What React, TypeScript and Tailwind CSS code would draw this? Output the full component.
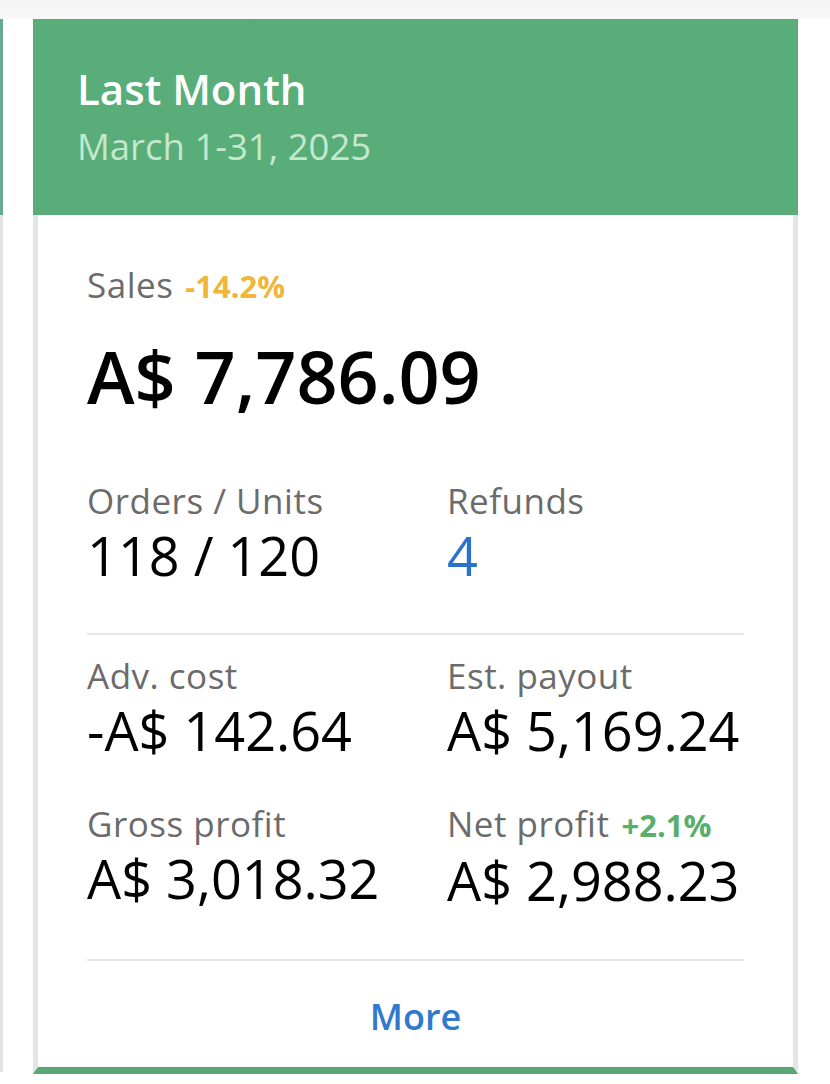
import React from 'react';

const font = "font-['Open_Sans','Noto_Sans',sans-serif]";

type StatProps = {
  label: string;
  value: string;
  badge?: { text: string; color: string };
  valueClass?: string;
};

// One label / value pair of the stats grid
const Stat: React.FC<StatProps> = ({ label, value, badge, valueClass = 'text-black' }) => (
  <div>
    <div className="flex items-baseline gap-[12px] text-[35px] leading-[35px] tracking-[0.5px] text-[#6b6b6b]">
      <span>{label}</span>
      {badge && <span className={`text-[31px] font-bold tracking-normal ${badge.color}`}>{badge.text}</span>}
    </div>
    <div className={`mt-[10px] text-[54px] leading-[54px] ${valueClass}`}>{value}</div>
  </div>
);

export default function App() {
  return (
    <div className={`min-h-[1084px] bg-white ${font}`}>
      <div className="h-[19px] bg-gradient-to-b from-[#f3f3f3] to-[#f8f8f8]" />
      <div className="flex">
        {/* Edge of the previous card */}
        <div className="flex w-[3px] flex-col">
          <div className="h-[196px] bg-[#68a996]" />
          <div className="h-[857px] bg-[#e3e3e3]" />
        </div>

        {/* Card */}
        <div className="ml-[30px] w-[765px]">
          <div className="h-[196px] bg-[#59ad78] pl-[44px] pt-[49px]">
            <h2 className="text-[42px] font-semibold leading-none text-white">Last Month</h2>
            <p className="mt-[18px] text-[36.5px] leading-none text-[#c3e8cd]">March 1-31, 2025</p>
          </div>

          <div className="border-x-[5px] border-b-[7px] border-x-[#e4e4e4] border-b-[#5aa677] pl-[49px] pr-[49px] pt-[52px] pb-[32px]">
            <div className="flex items-baseline gap-[12px] text-[35px] leading-[35px] tracking-[0.5px] text-[#6b6b6b]">
              <span>Sales</span>
              <span className="text-[31px] font-bold tracking-normal text-[#f0b63c]">-14.2%</span>
            </div>
            <div className="mt-[36px] text-[72px] font-semibold leading-[72px] text-black">A$ 7,786.09</div>

            <div className="mt-[71px] grid grid-cols-[360px_1fr]">
              <Stat label="Orders / Units" value="118 / 120" />
              <Stat label="Refunds" value="4" valueClass="text-[#2a72cc]" />
            </div>

            <div className="mt-[51px] h-[2px] bg-[#e6e6e6]" />

            <div className="mt-[23px] grid grid-cols-[360px_1fr] gap-y-[49px]">
              <Stat label="Adv. cost" value="-A$ 142.64" />
              <Stat label="Est. payout" value="A$ 5,169.24" />
              <Stat label="Gross profit" value="A$ 3,018.32" />
              <Stat
                label="Net profit"
                value="A$ 2,988.23"
                badge={{ text: '+2.1%', color: 'text-[#5aae6c]' }}
              />
            </div>

            <div className="mt-[52px] h-[2px] bg-[#e6e6e6]" />

            <div className="mt-[38px] text-center text-[36px] font-semibold leading-none text-[#2f7acf]">More</div>
          </div>
        </div>
      </div>
    </div>
  );
}
